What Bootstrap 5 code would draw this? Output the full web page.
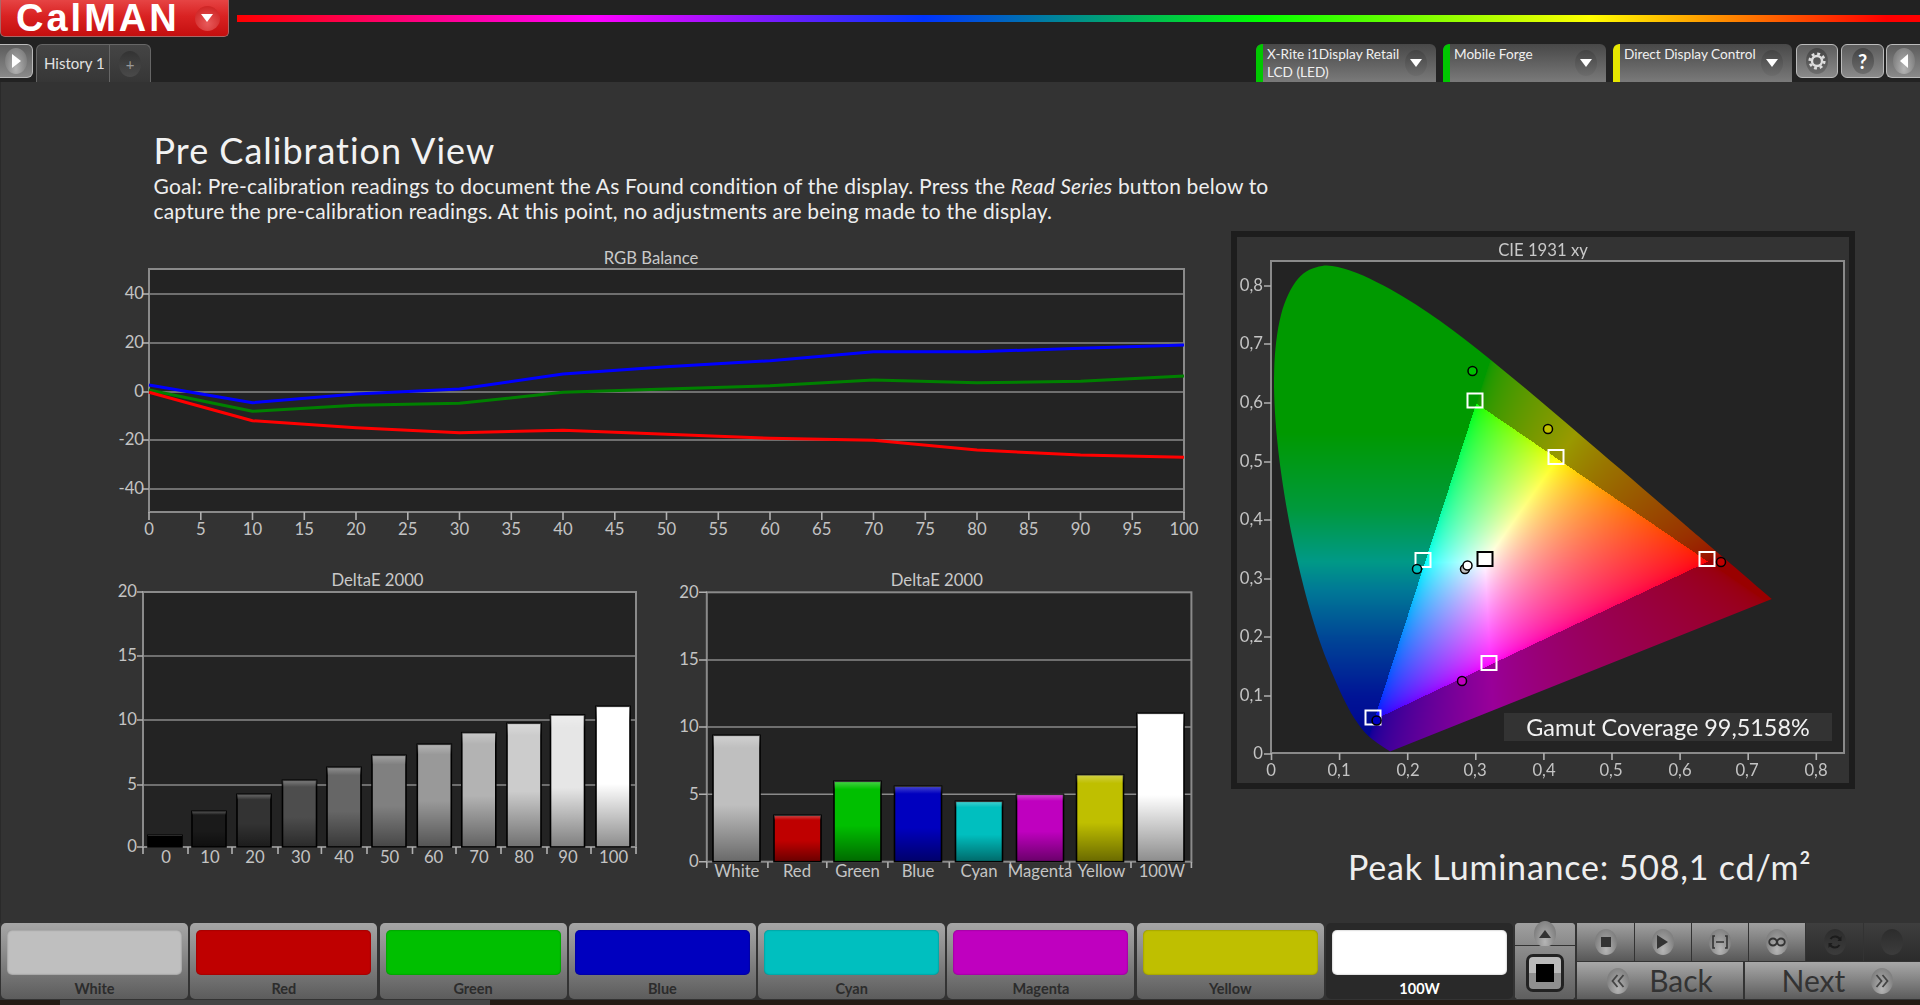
<!DOCTYPE html>
<html lang="en">
<head>
<meta charset="utf-8">
<title>CalMAN</title>
<link href="https://cdn.jsdelivr.net/npm/bootstrap@5.3.0/dist/css/bootstrap.min.css" rel="stylesheet">
<style>
html,body{height:1005px;overflow:hidden}
body{background:#222;color:#eee;font-family:"Lato","Liberation Sans",sans-serif}
.topbar{height:44px;flex:none}
.logo{width:229px;height:37px;flex:none;background:linear-gradient(#e64444,#d92222 45%,#c40f0f);border:1px solid #a66;border-top:0;border-radius:0 0 5px 5px;color:#fff;font:bold 38px/37px "Liberation Sans",sans-serif;letter-spacing:3px;padding-left:15px}
.logo .orb{margin-left:15px;width:25px;height:25px;background:radial-gradient(circle at 50% 70%,#e85a5a,#c81818)}
.rainbow{height:7px;margin:15px 0 0 8px;background:linear-gradient(90deg,#f00 0,#f0f 21.3%,#03f 40.8%,#0f0 60.8%,#ff0 80.4%,#f00 98%)}
.toolbar{height:38px;flex:none}
.orb{width:22px;height:26px;border-radius:50%;background:linear-gradient(#444,#6c6c6c);flex:none}
.orb-light{background:radial-gradient(ellipse at 50% 80%,#b5b5b5,#6e6e6e)}
.tool{height:34px;border:1px solid #bbb;border-radius:6px;background:linear-gradient(#5c5c5c,#8a8a8a)}
.play{width:33px;border-left:0;border-radius:0 6px 6px 0;margin-right:3px}
.tabs{width:115px;height:38px;border:1px solid #666;border-bottom:0;border-radius:6px 6px 0 0;background:linear-gradient(#454545,#363636);font-size:15px;color:#e2e2e2}
.tab-name{width:73px;height:37px;border-right:1px solid #666;line-height:36px;padding-left:7px}
.tab-add{color:#999;font-size:15px;padding-top:1px}
.tab-add .orb{background:linear-gradient(#333,#4a4a4a)}
.device{height:38px;background:linear-gradient(#484848,#7a7a7a);border-radius:6px 6px 0 0;font-size:13.6px;line-height:18px;color:#f0f0f0;padding:1px 9px 0 11px;position:relative;overflow:hidden}
.device::before{content:"";position:absolute;left:0;top:0;bottom:0;width:7px;border-radius:6px 0 0 0;background:var(--led)}
.device .label{white-space:nowrap}
.d1{width:180px;margin-right:7px}.d2{width:163px;margin-right:7px}.d3{width:179px;margin-right:4px}
.device .orb{margin-top:5px}
.t1{width:42px;margin-right:3px}.t2{width:43px;margin-right:2px}.t3{width:34px;border-right:0;border-radius:6px 0 0 6px}
main{background:#333;flex:1 1 auto;min-height:0;border-left:1px solid #2a2a2a}
.intro{padding:48px 0 5px 152.5px;height:149px;flex:none}
.intro h1{font-size:36px;line-height:40px;font-weight:400;letter-spacing:1px;margin:0 0 3px;color:#f2f2f2}
.intro p{font-size:21px;line-height:25px;letter-spacing:.18px;margin:0;color:#eee;white-space:nowrap}
svg{display:block}
svg text{font-family:"Lato","Liberation Sans",sans-serif;fill:#c4c4c4;font-size:16.7px;dominant-baseline:central;transform:translateY(-.7px)}
.ax-y{text-anchor:end}.ax-x,.ttl{text-anchor:middle}
.ttl{fill:#c9c9c9}
.frame{fill:#232323;stroke:#8a8a8a;stroke-width:2}
.grid{stroke:#8a8a8a;stroke-width:1.6}
.tick{stroke:#b0b0b0;stroke-width:1.6}
.bar{stroke:#000;stroke-width:1.6}
.series{fill:none;stroke-width:3;stroke-linejoin:round}
.left-col{width:1230px;flex:none}
.panel{width:624px;height:558px;background:#333;border:6px solid #1d1d1d;display:grid}
.panel>*{grid-area:1/1}
.peak{font-size:34px;line-height:40px;letter-spacing:.8px;color:#eee;margin:58px 0 0 117px;white-space:nowrap}
.cov{fill:#f2f2f2!important;font-size:23.4px!important;text-anchor:middle}
.marker-s{fill:none;stroke:#fff;stroke-width:2}
.marker-c{stroke:#000;stroke-width:1.5}
.bottom{height:77px;flex:none;background:#333;padding-left:1px}
.swatch{width:187px;height:76px;flex:none;margin-right:2.3px;padding:7px 6px 0;border:0;border-radius:5px;background:linear-gradient(#a6a6a6,#8e8e8e 35%,#5c5c5c);color:#2c2c2c;font-size:14.5px;font-weight:700;line-height:28px;display:block;text-align:center}
.swatch:hover{background:linear-gradient(#a6a6a6,#8e8e8e 35%,#5c5c5c);color:#2c2c2c}
.swatch i{display:block;height:45px;border-radius:5px;background:var(--c);box-shadow:inset 0 0 2px rgba(0,0,0,.4)}
.swatch.on{background:#292929;color:#fff}
.swatch.on:hover{background:#292929;color:#fff}
.scan{width:60px;height:76px;flex:none;border-radius:4px;background:#8c8c8c;margin:0 2px 0 0}
.scan-up{height:23px;border-bottom:1px solid #333;background:linear-gradient(#a0a0a0,#8a8a8a);border-radius:4px 4px 0 0}
.scan-down{flex:1;background:linear-gradient(#8e8e8e,#5f5f5f);border-radius:0 0 4px 4px}
.stopbox{width:38px;height:38px;border:3px solid #222;border-radius:7px;background:linear-gradient(#bbb 50%,#8f8f8f 50%)}
.stopbox i{display:block;width:18px;height:18px;background:#000}
.transport{flex:1;gap:1px}
.row-top{height:38px;gap:1px}
.row-bot{height:37px;gap:2px}
.cell{flex:1;background:linear-gradient(#a0a0a0,#848484 40%,#585858)}
.cell.off{background:linear-gradient(#3e3e3e,#2b2b2b)}
.cell.off .orb{background:linear-gradient(#2c2c2c,#3c3c3c)}
.nav-btn{flex:1;border:0;padding:0;border-radius:0;background:linear-gradient(#a8a8a8,#8a8a8a 40%,#5c5c5c);color:#333;font-size:30px;line-height:37px;font-weight:400;gap:20px}
.nav-btn:hover{background:linear-gradient(#a8a8a8,#8a8a8a 40%,#5c5c5c);color:#333}
.nav-btn.next{gap:26px;padding-left:10px}
.strip{height:5px;flex:none;background:#241a14}
.strip i{display:block;width:430px;height:5px;margin-left:60px;background:#444}
</style>
</head>
<body class="d-flex flex-column">

<header class="topbar d-flex align-items-start">
  <div class="logo d-flex align-items-center"><span>CalMAN</span>
    <span class="orb d-flex align-items-center justify-content-center"><svg width="12" height="8" viewBox="0 0 12 8"><path d="M0 0h12L6 8z" fill="#fff"/></svg></span></div>
  <div class="rainbow flex-grow-1"></div>
</header>

<nav class="toolbar d-flex align-items-start">
  <div class="tool play d-flex align-items-center justify-content-center"><span class="orb orb-light d-flex align-items-center justify-content-center"><svg width="9" height="14" viewBox="0 0 9 14"><path d="M0 0l9 7-9 7z" fill="#fff"/></svg></span></div>
  <div class="tabs d-flex"><div class="tab-name">History 1</div><div class="tab-add flex-grow-1 d-flex align-items-center justify-content-center"><span class="orb d-flex align-items-center justify-content-center">+</span></div></div>
  <div class="device d1 ms-auto d-flex" style="--led:#00c800"><div class="label flex-grow-1">X-Rite i1Display Retail<br>LCD (LED)</div><span class="orb d-flex align-items-center justify-content-center"><svg width="12" height="8" viewBox="0 0 12 8"><path d="M0 0h12L6 8z" fill="#fff"/></svg></span></div>
  <div class="device d2 d-flex" style="--led:#00c800"><div class="label flex-grow-1">Mobile Forge</div><span class="orb d-flex align-items-center justify-content-center"><svg width="12" height="8" viewBox="0 0 12 8"><path d="M0 0h12L6 8z" fill="#fff"/></svg></span></div>
  <div class="device d3 d-flex" style="--led:#e6e600"><div class="label flex-grow-1">Direct Display Control</div><span class="orb d-flex align-items-center justify-content-center"><svg width="12" height="8" viewBox="0 0 12 8"><path d="M0 0h12L6 8z" fill="#fff"/></svg></span></div>
  <div class="tool t1 d-flex align-items-center justify-content-center"><span class="orb d-flex align-items-center justify-content-center"><svg width="20" height="20" viewBox="0 0 20 20"><circle cx="10" cy="10" r="5" fill="none" stroke="#ddd" stroke-width="2.4"/><circle cx="10" cy="10" r="7.3" fill="none" stroke="#ddd" stroke-width="2.6" stroke-dasharray="2.9 2.83"/></svg></span></div>
  <div class="tool t2 d-flex align-items-center justify-content-center"><span class="orb d-flex align-items-center justify-content-center fw-bold text-white fs-5">?</span></div>
  <div class="tool t3 d-flex align-items-center justify-content-center"><span class="orb orb-light d-flex align-items-center justify-content-center"><svg width="8" height="14" viewBox="0 0 8 14"><path d="M8 0L0 7l8 7z" fill="#fff"/></svg></span></div>
</nav>

<main class="d-flex flex-column">
  <section class="intro">
    <h1>Pre Calibration View</h1>
    <p>Goal: Pre-calibration readings to document the As Found condition of the display. Press the <em>Read Series</em> button below to<br>capture the pre-calibration readings. At this point, no adjustments are being made to the display.</p>
  </section>
  <div class="d-flex flex-grow-1">
    <div class="left-col d-flex flex-column">
      <svg width="1230" height="310" viewBox="1 231 1230 310">
        <text class="ttl" x="651" y="259">RGB Balance</text>
        <rect class="frame" x="149" y="269" width="1035" height="243"/>
        <g class="grid"><line x1="149" x2="1184" y1="294" y2="294"/><line x1="149" x2="1184" y1="343" y2="343"/><line x1="149" x2="1184" y1="392" y2="392"/><line x1="149" x2="1184" y1="440" y2="440"/><line x1="149" x2="1184" y1="489" y2="489"/></g>
        <g class="tick"><line x1="142" x2="149" y1="294" y2="294"/><line x1="142" x2="149" y1="343" y2="343"/><line x1="142" x2="149" y1="392" y2="392"/><line x1="142" x2="149" y1="440" y2="440"/><line x1="142" x2="149" y1="489" y2="489"/>
          <path d="M149 512v8M200.8 512v8M252.5 512v8M304.3 512v8M356 512v8M407.8 512v8M459.5 512v8M511.3 512v8M563 512v8M614.8 512v8M666.5 512v8M718.3 512v8M770 512v8M821.8 512v8M873.5 512v8M925.3 512v8M977 512v8M1028.8 512v8M1080.5 512v8M1132.3 512v8M1184 512v8"/></g>
        <g><text class="ax-y" x="144" y="294">40</text><text class="ax-y" x="144" y="343">20</text><text class="ax-y" x="144" y="392">0</text><text class="ax-y" x="144" y="440">-20</text><text class="ax-y" x="144" y="489">-40</text></g>
        <g class="ax-x"><text x="149" y="530">0</text><text x="200.8" y="530">5</text><text x="252.5" y="530">10</text><text x="304.3" y="530">15</text><text x="356" y="530">20</text><text x="407.8" y="530">25</text><text x="459.5" y="530">30</text><text x="511.3" y="530">35</text><text x="563" y="530">40</text><text x="614.8" y="530">45</text><text x="666.5" y="530">50</text><text x="718.3" y="530">55</text><text x="770" y="530">60</text><text x="821.8" y="530">65</text><text x="873.5" y="530">70</text><text x="925.3" y="530">75</text><text x="977" y="530">80</text><text x="1028.8" y="530">85</text><text x="1080.5" y="530">90</text><text x="1132.3" y="530">95</text><text x="1184" y="530">100</text></g>
        <polyline class="series" stroke="#0000ff" points="149,385 252.5,402.7 356,394 459.5,389 563,374 666.5,366.7 770,360.7 873.5,351.7 977,351.7 1080.5,348.3 1184,345"/>
        <polyline class="series" stroke="#008000" points="149,390 252.5,411.3 356,405.3 459.5,403.3 563,392.3 666.5,389 770,385.7 873.5,380 977,382.7 1080.5,381.3 1184,376"/>
        <polyline class="series" stroke="#ff0000" points="149,392.3 252.5,420.7 356,427.7 459.5,432.7 563,430.3 666.5,434.3 770,438.3 873.5,440.3 977,450 1080.5,455 1184,457.3"/>
      </svg>
      <div class="d-flex">
        <svg width="659" height="340" viewBox="1 541 659 340">
          <defs><linearGradient id="sheen" x1="0" y1="0" x2="0" y2="1"><stop offset="0" stop-color="#fff" stop-opacity=".28"/><stop offset=".1" stop-color="#fff" stop-opacity="0"/><stop offset=".55" stop-color="#000" stop-opacity="0"/><stop offset="1" stop-color="#000" stop-opacity=".45"/></linearGradient></defs>
          <text class="ttl" x="377.5" y="580.5">DeltaE 2000</text>
          <rect class="frame" x="143" y="592" width="493" height="255"/>
          <g class="grid"><line x1="143" x2="636" y1="656" y2="656"/><line x1="143" x2="636" y1="720" y2="720"/><line x1="143" x2="636" y1="785" y2="785"/></g>
          <g class="tick"><path d="M137 592h6M137 656h6M137 720h6M137 785h6M137 847h6M143 847v7M188 847v7M232 847v7M278 847v7M321.4 847v7M367 847v7M412.5 847v7M456 847v7M501 847v7M547 847v7M591 847v7M636 847v7"/></g>
          <g><text class="ax-y" x="137" y="592">20</text><text class="ax-y" x="137" y="656">15</text><text class="ax-y" x="137" y="720">10</text><text class="ax-y" x="137" y="785">5</text><text class="ax-y" x="137" y="847">0</text></g>
          <g>
            <rect class="bar" x="148" y="835.3" width="34" height="11.7" fill="#000"/><rect x="148" y="835.3" width="34" height="11.7" fill="url(#sheen)"/>
            <rect class="bar" x="192" y="811.3" width="34" height="35.7" fill="#1a1a1a"/><rect x="192" y="811.3" width="34" height="35.7" fill="url(#sheen)"/>
            <rect class="bar" x="237" y="794.3" width="34" height="52.7" fill="#333"/><rect x="237" y="794.3" width="34" height="52.7" fill="url(#sheen)"/>
            <rect class="bar" x="282.5" y="780.3" width="34" height="66.7" fill="#4d4d4d"/><rect x="282.5" y="780.3" width="34" height="66.7" fill="url(#sheen)"/>
            <rect class="bar" x="327" y="767.3" width="34" height="79.7" fill="#666"/><rect x="327" y="767.3" width="34" height="79.7" fill="url(#sheen)"/>
            <rect class="bar" x="372" y="755.3" width="34" height="91.7" fill="#808080"/><rect x="372" y="755.3" width="34" height="91.7" fill="url(#sheen)"/>
            <rect class="bar" x="417.3" y="744.3" width="34" height="102.7" fill="#999"/><rect x="417.3" y="744.3" width="34" height="102.7" fill="url(#sheen)"/>
            <rect class="bar" x="461.8" y="732.7" width="34" height="114.3" fill="#b3b3b3"/><rect x="461.8" y="732.7" width="34" height="114.3" fill="url(#sheen)"/>
            <rect class="bar" x="507" y="723.3" width="34" height="123.7" fill="#ccc"/><rect x="507" y="723.3" width="34" height="123.7" fill="url(#sheen)"/>
            <rect class="bar" x="550.5" y="715" width="34" height="132" fill="#e6e6e6"/><rect x="550.5" y="715" width="34" height="132" fill="url(#sheen)"/>
            <rect class="bar" x="596" y="706.3" width="34" height="140.7" fill="#fff"/><rect x="596" y="706.3" width="34" height="140.7" fill="url(#sheen)"/>
          </g>
          <g class="ax-x"><text x="166" y="858">0</text><text x="210" y="858">10</text><text x="255" y="858">20</text><text x="300.7" y="858">30</text><text x="344" y="858">40</text><text x="389.6" y="858">50</text><text x="433.6" y="858">60</text><text x="479" y="858">70</text><text x="524" y="858">80</text><text x="568" y="858">90</text><text x="613.6" y="858">100</text></g>
        </svg>
        <svg width="571" height="340" viewBox="660 541 571 340">
          <text class="ttl" x="936.8" y="580.5">DeltaE 2000</text>
          <rect class="frame" x="706.8" y="592.3" width="484.6" height="269.4"/>
          <g class="grid"><line x1="706.8" x2="1191.4" y1="660" y2="660"/><line x1="706.8" x2="1191.4" y1="727" y2="727"/><line x1="706.8" x2="1191.4" y1="794.3" y2="794.3"/></g>
          <g class="tick"><path d="M699 592.3h8M699 660h8M699 727h8M699 794.3h8M699 861.7h8M706.8 862v6M767.9 862v6M826.8 862v6M887.9 862v6M949.3 862v6M1010.4 862v6M1069.6 862v6M1131 862v6M1191.4 862v6"/></g>
          <g><text class="ax-y" x="698.6" y="592.3">20</text><text class="ax-y" x="698.6" y="660">15</text><text class="ax-y" x="698.6" y="727">10</text><text class="ax-y" x="698.6" y="794.3">5</text><text class="ax-y" x="698.6" y="861.7">0</text></g>
          <g>
            <rect class="bar" x="713" y="735.3" width="47" height="126.4" fill="#bfbfbf"/><rect x="713" y="735.3" width="47" height="126.4" fill="url(#sheen)"/>
            <rect class="bar" x="774" y="815.3" width="47" height="46.4" fill="#bf0000"/><rect x="774" y="815.3" width="47" height="46.4" fill="url(#sheen)"/>
            <rect class="bar" x="834" y="781.3" width="47" height="80.4" fill="#00bf00"/><rect x="834" y="781.3" width="47" height="80.4" fill="url(#sheen)"/>
            <rect class="bar" x="894.5" y="786.3" width="47" height="75.4" fill="#0000bf"/><rect x="894.5" y="786.3" width="47" height="75.4" fill="url(#sheen)"/>
            <rect class="bar" x="955.5" y="801.3" width="47" height="60.4" fill="#00bfbf"/><rect x="955.5" y="801.3" width="47" height="60.4" fill="url(#sheen)"/>
            <rect class="bar" x="1016.5" y="794.3" width="47" height="67.4" fill="#bf00bf"/><rect x="1016.5" y="794.3" width="47" height="67.4" fill="url(#sheen)"/>
            <rect class="bar" x="1076.5" y="774.7" width="47" height="87" fill="#bfbf00"/><rect x="1076.5" y="774.7" width="47" height="87" fill="url(#sheen)"/>
            <rect class="bar" x="1137" y="713.3" width="47" height="148.4" fill="#fff"/><rect x="1137" y="713.3" width="47" height="148.4" fill="url(#sheen)"/>
          </g>
          <g class="ax-x"><text x="736.8" y="872">White</text><text x="797" y="872">Red</text><text x="857.5" y="872">Green</text><text x="918" y="872">Blue</text><text x="979" y="872">Cyan</text><text x="1040" y="872">Magenta</text><text x="1101.4" y="872">Yellow</text><text x="1161.8" y="872">100W</text></g>
        </svg>
      </div>
    </div>
    <div class="flex-grow-1">
      <figure class="panel m-0">
        <canvas id="gamut" width="612" height="546"></canvas>
        <svg width="612" height="546" viewBox="1237 237 612 546">
          <text class="ttl" x="1543" y="250.5">CIE 1931 xy</text>
          <rect x="1271" y="261" width="573" height="492" fill="none" stroke="#8a8a8a" stroke-width="2"/>
          <g class="tick"><path d="M1264 286h7M1264 344h7M1264 403h7M1264 462h7M1264 520h7M1264 579h7M1264 637h7M1264 696h7M1264 754h7M1271.5 753v7M1339.6 753v7M1407.7 753v7M1475.8 753v7M1543.9 753v7M1612 753v7M1680.1 753v7M1748.2 753v7M1816.3 753v7"/></g>
          <g><text class="ax-y" x="1263" y="286">0,8</text><text class="ax-y" x="1263" y="344">0,7</text><text class="ax-y" x="1263" y="403">0,6</text><text class="ax-y" x="1263" y="462">0,5</text><text class="ax-y" x="1263" y="520">0,4</text><text class="ax-y" x="1263" y="579">0,3</text><text class="ax-y" x="1263" y="637">0,2</text><text class="ax-y" x="1263" y="696">0,1</text><text class="ax-y" x="1263" y="754">0</text></g>
          <g class="ax-x"><text x="1271" y="770.5">0</text><text x="1339" y="770.5">0,1</text><text x="1408" y="770.5">0,2</text><text x="1475" y="770.5">0,3</text><text x="1544" y="770.5">0,4</text><text x="1611" y="770.5">0,5</text><text x="1680" y="770.5">0,6</text><text x="1747" y="770.5">0,7</text><text x="1816" y="770.5">0,8</text></g>
          <rect x="1504" y="713" width="328" height="28" fill="#333"/>
          <text class="cov" x="1668" y="727.5">Gamut Coverage 99,5158%</text>
          <g class="marker-s">
            <rect x="1699.5" y="552" width="15" height="14"/><rect x="1467.5" y="393.5" width="15" height="14"/><rect x="1365.5" y="710.5" width="15" height="14"/><rect x="1415.5" y="553" width="15" height="14"/><rect x="1548.5" y="450" width="15" height="14"/><rect x="1481.5" y="656" width="15" height="14"/>
          </g>
          <rect x="1477.5" y="552" width="15" height="14" fill="rgba(255,255,255,.85)" stroke="#000" stroke-width="2"/>
          <g class="marker-c">
            <circle cx="1472.5" cy="371" r="4.5" fill="#00c000"/><circle cx="1548" cy="429" r="4.5" fill="#c0c000"/><circle cx="1721" cy="562" r="4.5" fill="#c00000"/><circle cx="1417" cy="569" r="4.5" fill="#00c0c0"/><circle cx="1465" cy="569" r="4.5" fill="#c0c0c0"/><circle cx="1467.5" cy="565.5" r="4.5" fill="#fff"/><circle cx="1462" cy="681" r="4.5" fill="#c000c0"/><circle cx="1376.6" cy="720.5" r="4.5" fill="#0000c0"/>
          </g>
        </svg>
      </figure>
      <div class="peak">Peak Luminance: 508,1 cd/m²</div>
    </div>
  </div>
</main>

<footer class="bottom d-flex">
  <button class="btn swatch" style="--c:#bfbfbf"><i></i>White</button>
  <button class="btn swatch" style="--c:#bf0000"><i></i>Red</button>
  <button class="btn swatch" style="--c:#00bf00"><i></i>Green</button>
  <button class="btn swatch" style="--c:#0000bf"><i></i>Blue</button>
  <button class="btn swatch" style="--c:#00bfbf"><i></i>Cyan</button>
  <button class="btn swatch" style="--c:#bf00bf"><i></i>Magenta</button>
  <button class="btn swatch" style="--c:#bfbf00"><i></i>Yellow</button>
  <button class="btn swatch on" style="--c:#fff"><i></i>100W</button>
  <div class="scan d-flex flex-column">
    <div class="scan-up d-flex align-items-center justify-content-center"><span class="orb orb-light d-flex align-items-center justify-content-center"><svg width="12" height="8" viewBox="0 0 12 8"><path d="M6 0l6 8H0z" fill="#333"/></svg></span></div>
    <div class="scan-down d-flex align-items-center justify-content-center"><div class="stopbox d-flex align-items-center justify-content-center"><i></i></div></div>
  </div>
  <div class="transport d-flex flex-column">
    <div class="row-top d-flex">
      <div class="cell d-flex align-items-center justify-content-center"><span class="orb orb-light d-flex align-items-center justify-content-center"><svg width="10" height="10" viewBox="0 0 10 10"><rect width="10" height="10" fill="#333"/></svg></span></div>
      <div class="cell d-flex align-items-center justify-content-center"><span class="orb orb-light d-flex align-items-center justify-content-center"><svg width="11" height="14" viewBox="0 0 11 14"><path d="M0 0l11 7-11 7z" fill="#333"/></svg></span></div>
      <div class="cell d-flex align-items-center justify-content-center"><span class="orb orb-light d-flex align-items-center justify-content-center"><svg width="16" height="14" viewBox="0 0 16 14"><path d="M3 1H1v12h2M13 1h2v12h-2M4 7h8" fill="none" stroke="#333" stroke-width="1.6"/></svg></span></div>
      <div class="cell d-flex align-items-center justify-content-center"><span class="orb orb-light d-flex align-items-center justify-content-center"><svg width="18" height="10" viewBox="0 0 18 10"><ellipse cx="5" cy="5" rx="3.8" ry="3.5" fill="none" stroke="#333" stroke-width="1.8"/><ellipse cx="13" cy="5" rx="3.8" ry="3.5" fill="none" stroke="#333" stroke-width="1.8"/></svg></span></div>
      <div class="cell off d-flex align-items-center justify-content-center"><span class="orb d-flex align-items-center justify-content-center"><svg width="14" height="16" viewBox="0 0 14 16"><path d="M12 5.5A5.5 5.5 0 0 0 2.5 5M2 10.5A5.5 5.5 0 0 0 11.5 11" fill="none" stroke="#1c1c1c" stroke-width="2"/><path d="M13.5 2v5h-4zM.5 14V9h4z" fill="#1c1c1c"/></svg></span></div>
      <div class="cell off d-flex align-items-center justify-content-center"><span class="orb"></span></div>
    </div>
    <div class="row-bot d-flex">
      <button class="btn nav-btn d-flex align-items-center justify-content-center"><span class="orb orb-light d-flex align-items-center justify-content-center"><svg width="14" height="14" viewBox="0 0 14 14"><path d="M6.5 1L1.5 7l5 6M12.5 1l-5 6 5 6" fill="none" stroke="#444" stroke-width="1.8"/></svg></span>Back</button>
      <button class="btn nav-btn next d-flex align-items-center justify-content-center">Next<span class="orb orb-light d-flex align-items-center justify-content-center"><svg width="14" height="14" viewBox="0 0 14 14"><path d="M1.5 1l5 6-5 6M7.5 1l5 6-5 6" fill="none" stroke="#444" stroke-width="1.8"/></svg></span></button>
    </div>
  </div>
</footer>
<div class="strip"><i></i></div>

<script src="https://cdn.jsdelivr.net/npm/bootstrap@5.3.0/dist/js/bootstrap.bundle.min.js"></script>
<script>
(function(){
  var cv=document.getElementById('gamut'),ctx=cv.getContext('2d');
  var W=cv.width,H=cv.height;
  var X=function(v){return 1271.5+681*v-1237},Y=function(v){return 754.5-586*v-237};
  var locus=[[.1741,.005],[.144,.0297],[.1241,.0578],[.1096,.0868],[.0913,.1327],[.0687,.2007],[.0454,.295],[.0235,.4127],[.0082,.5384],[.0039,.6548],[.0139,.7502],[.0389,.812],[.0743,.8338],[.1142,.8262],[.1547,.8059],[.1929,.7816],[.2296,.7543],[.2658,.7243],[.3016,.6923],[.3373,.6589],[.3731,.6245],[.4087,.5896],[.4441,.5547],[.4788,.5202],[.5125,.4866],[.5448,.4544],[.5752,.4242],[.6029,.3965],[.627,.3725],[.6658,.334],[.6915,.3083],[.7079,.292],[.726,.274],[.7347,.2653]];
  var stops=[[0,0,0,140],[.1,0,20,150],[.2,0,70,150],[.28,0,120,150],[.33,0,153,135],[.42,0,153,60],[.55,0,153,0],[1,0,153,0]];
  function leftColor(y){
    for(var i=1;i<stops.length;i++){if(y<=stops[i][0]){var a=stops[i-1],b=stops[i],t=(y-a[0])/(b[0]-a[0]);return [a[1]+(b[1]-a[1])*t,a[2]+(b[2]-a[2])*t,a[3]+(b[3]-a[3])*t];}}
    return [0,153,0];
  }
  var off=document.createElement('canvas');off.width=W;off.height=H;
  var oc=off.getContext('2d'),img=oc.createImageData(W,H),d=img.data;
  for(var py=0;py<H;py++){for(var px=0;px<W;px++){
    var x=(px+1237-1271.5)/681,y=(754.5-py-237)/586;if(y<.001)y=.001;
    var z=1-x-y,r=3.2406*x-1.5372*y-.4986*z,g=-.9689*x+1.8758*y+.0415*z,b=.0557*x-.204*y+1.057*z,c,k=py*W*4+px*4;
    if(r<0){c=leftColor(y);}
    else{
      var inside=g>=0&&b>=0,R=Math.max(r,0),G=Math.max(g,0),B=Math.max(b,0),m=Math.max(R,G,B)||1,s=inside?255:153,e=inside?.62:1/2.2;
      c=[s*Math.pow(R/m,e),s*Math.pow(G/m,e),s*Math.pow(B/m,e)];
    }
    d[k]=c[0];d[k+1]=c[1];d[k+2]=c[2];d[k+3]=255;
  }}
  oc.putImageData(img,0,0);
  ctx.fillStyle='#232323';ctx.fillRect(X(0)-.5,261-237,573,492);
  var P=locus.map(function(p){return [X(p[0]),Y(p[1])];});
  ctx.beginPath();ctx.moveTo(P[0][0],P[0][1]);
  for(var i=0;i<P.length-1;i++){
    var p0=P[i-1]||P[i],p1=P[i],p2=P[i+1],p3=P[i+2]||p2;
    ctx.bezierCurveTo(p1[0]+(p2[0]-p0[0])/6,p1[1]+(p2[1]-p0[1])/6,p2[0]-(p3[0]-p1[0])/6,p2[1]-(p3[1]-p1[1])/6,p2[0],p2[1]);
  }
  ctx.closePath();ctx.clip();
  ctx.drawImage(off,0,0);
})();
</script>
</body>
</html>
